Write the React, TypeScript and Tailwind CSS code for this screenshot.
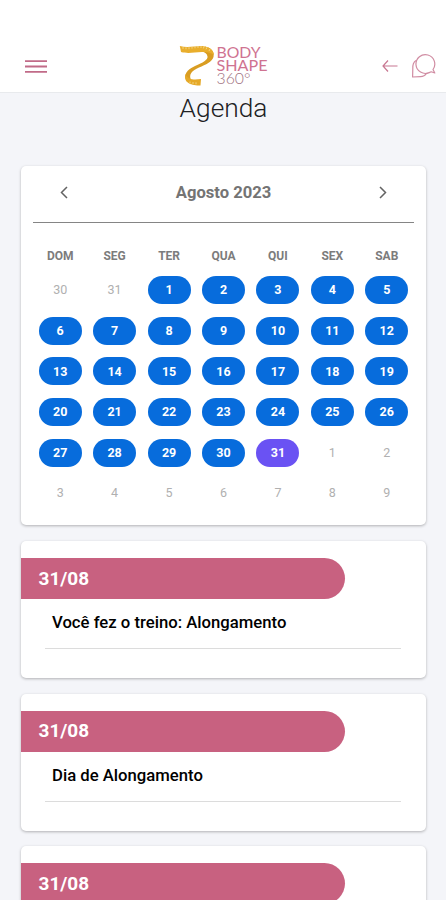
const WEEK_DAYS = ['DOM', 'SEG', 'TER', 'QUA', 'QUI', 'SEX', 'SAB'];

type Day = {
  number: number;
  status: 'outside' | 'trained' | 'today';
};

type Event = {
  date: string;
  title: string;
};

const range = (from: number, to: number, status: Day['status']): Day[] =>
  Array.from({ length: to - from + 1 }, (_, i) => ({ number: from + i, status }));

const days: Day[] = [
  ...range(30, 31, 'outside'),
  ...range(1, 30, 'trained'),
  { number: 31, status: 'today' },
  ...range(1, 9, 'outside'),
];

const events: Event[] = [
  { date: '31/08', title: 'Você fez o treino: Alongamento' },
  { date: '31/08', title: 'Dia de Alongamento' },
];

const dayStyles = {
  outside: 'text-[#b0b0b0]',
  trained: 'bg-[#076cdc] font-bold text-white',
  today: 'bg-[#6a52f3] font-bold text-white',
};

const Logo = () => (
  <svg width="92" height="44" viewBox="0 0 92 44" role="img">
    {/* measuring tape */}
    <path d="M26 3.5C33 5 35.5 9 34.5 14C33 19 27 21.5 20 24.5C13 27.5 9.5 31 12 37L8 38.5C3.5 32 8 26.5 16 23C24 19.5 29 17 28.5 13.5C28 10.5 26 9.5 23 8.5Z" fill="#d99d22" />
    <path d="M.8 3C10 5.5 18 2 26 3.5C31 4.5 34.5 7 35 12C32 9.5 27 9 23 9C15 9 10 11 2 9Z" fill="#e9ae2c" />
    <path d="M6.5 31C9 37 15 37 22 36L21.5 42.5C13 42.5 4 40.5 6.5 31Z" fill="#e5a928" />
    <path d="M4 4v2M7 4.3v2M10 4.2v2M13 3.7v2M16 3.3v2M19 3v2M22 3v2M25 3.4l-.5 2M28 4.3l-1 2M31 6l-1 2M11 38.5v2M14 39v2M17 39.3v2" stroke="#f9e4a4" strokeWidth=".7" />
    <g fontFamily="Lato, sans-serif" fontWeight="400" fontSize="15.4" fill="#cf7391">
      <text x="37.5" y="15.3" textLength="44" lengthAdjust="spacingAndGlyphs">BODY</text>
      <text x="37.5" y="28.3" textLength="51" lengthAdjust="spacingAndGlyphs">SHAPE</text>
      <text x="37.5" y="41.3" textLength="34" lengthAdjust="spacingAndGlyphs" fontWeight="300" fill="#a17381">360°</text>
    </g>
  </svg>
);

const Header = () => (
  <header className="flex h-[93px] items-end border-b border-[#e8eaed] bg-white pl-[25px] pr-[10px]">
    <svg className="mb-[18px]" width="22" height="15" viewBox="0 0 22 15" stroke="#c16b88" strokeWidth="1.8">
      <path d="M0 2.2h22M0 7.5h22M0 12.8h22" />
    </svg>
    <div className="mb-[5px] ml-[132px]">
      <Logo />
    </div>
    <div className="mb-[13px] ml-auto flex items-center gap-[13px]">
      <svg width="16" height="14" viewBox="0 0 16 14" fill="none" stroke="#c87791" strokeWidth="1.2">
        <path d="M15.5 7H1M6 1.5L1 7l5 5.5" />
      </svg>
      <svg width="25" height="26" viewBox="0 0 25 26" fill="none" stroke="#d08ca2" strokeWidth="1.2" strokeLinejoin="round">
        <path d="M22 16.5A9.4 9.4 0 1 0 18.2 19.6L20.2 18.8L23.8 20Z" />
        <path d="M5 7.5C1.6 9.5 1.6 13 1.8 16L1.6 24L9.5 23.6C12 23.6 14.5 22 15.5 20.4" />
      </svg>
    </div>
  </header>
);

const Chevron = ({ direction }: { direction: 'left' | 'right' }) => (
  <svg width="8" height="13" viewBox="0 0 8 13" fill="none" stroke="#636363" strokeWidth="1.5">
    <path d={direction === 'left' ? 'M7 1L1.5 6.5L7 12' : 'M1 1L6.5 6.5L1 12'} />
  </svg>
);

const Calendar = () => (
  <section className="h-[359px] rounded-[5px] bg-white px-3 shadow-[0_1px_3px_rgba(0,0,0,0.28)]">
    <div className="flex h-[57px] items-center justify-between border-b border-[#858585] px-[27px] pb-[3px]">
      <Chevron direction="left" />
      <h2 className="pt-[2px] text-[16.6px] font-bold text-[#747474]">Agosto 2023</h2>
      <Chevron direction="right" />
    </div>
    <div className="mt-[23px] grid grid-cols-7 text-center text-[12px] font-bold leading-[20px] text-[#7c7c7c]">
      {WEEK_DAYS.map((day) => (
        <span key={day}>{day}</span>
      ))}
    </div>
    <div className="mt-[4px] grid auto-rows-[40.6px] grid-cols-7 place-items-center text-[12.5px]">
      {days.map((day, index) => (
        <span
          key={index}
          className={`flex h-[28px] w-[43px] items-center justify-center rounded-full pt-px ${dayStyles[day.status]}`}
        >
          {day.number}
        </span>
      ))}
    </div>
  </section>
);

const DateBand = ({ date }: { date: string }) => (
  <div className="flex h-[41px] w-[324px] items-center rounded-r-full bg-[#c86180] pl-[17.5px] pt-px text-[19px] font-bold text-white">
    {date}
  </div>
);

const EventCard = ({ date, title }: Event) => (
  <article className="h-[137px] shrink-0 rounded-[5px] bg-white pt-[17px] shadow-[0_1px_3px_rgba(0,0,0,0.28)]">
    <DateBand date={date} />
    <div className="ml-6 mr-[25px] h-[50px] border-b border-[#dcdcdc] pl-[7px] pt-[13px] text-[16.7px] font-medium leading-[22px] text-black">
      {title}
    </div>
  </article>
);

const App = () => (
  <div className="h-[900px] w-[446px] overflow-hidden bg-[#f4f5f9] font-['Roboto',sans-serif]">
    <Header />
    <main className="pl-[21px] pr-5">
      <h1 className="h-[73px] text-center text-[26.3px] font-light leading-[30px] text-[#202124]">Agenda</h1>
      <Calendar />
      <div className="mt-4 flex flex-col gap-[15.7px]">
        {events.map((event, index) => (
          <EventCard key={index} date={event.date} title={event.title} />
        ))}
        <article className="h-[137px] rounded-[5px] bg-white pt-[17px] shadow-[0_1px_3px_rgba(0,0,0,0.28)]">
          <DateBand date="31/08" />
        </article>
      </div>
    </main>
  </div>
);

export default App;
